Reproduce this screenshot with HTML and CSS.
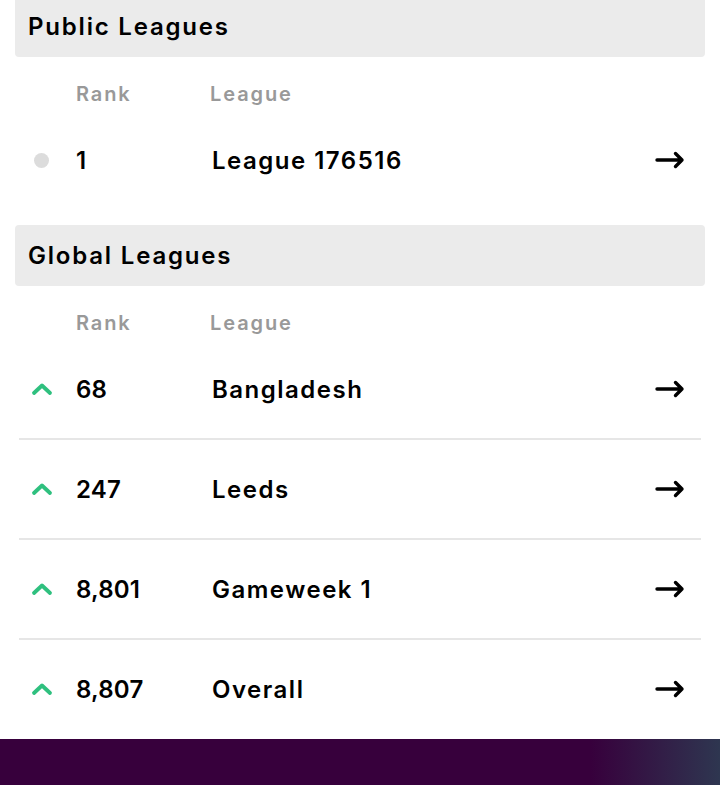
FILE: index.html
```html
<!DOCTYPE html>
<html>
<head>
<meta charset="utf-8">
<link rel="stylesheet" href="styles.css">
</head>
<body>
<main class="page">
  <section class="group first">
    <h2 class="group-title">Public Leagues</h2>
    <div class="cols"><span class="col-rank">Rank</span><span class="col-league">League</span></div>
    <div class="row last">
      <span class="mv"><span class="dot"></span></span>
      <span class="rank">1</span>
      <span class="name">League 176516</span>
      <span class="go"><svg width="30" height="20" viewBox="0 0 30 20"><path d="M2 10H27M20.5 3.5L27 10L20.5 16.5" fill="none" stroke="#000" stroke-width="3.4" stroke-linecap="round" stroke-linejoin="round"/></svg></span>
    </div>
  </section>
  <section class="group">
    <h2 class="group-title">Global Leagues</h2>
    <div class="cols"><span class="col-rank">Rank</span><span class="col-league">League</span></div>
    <div class="row">
      <span class="mv"><svg width="24" height="16" viewBox="0 0 24 16"><path d="M4 12L12 4.5L20 12" fill="none" stroke="#2fc07f" stroke-width="3.8" stroke-linecap="round" stroke-linejoin="round"/></svg></span>
      <span class="rank">68</span>
      <span class="name">Bangladesh</span>
      <span class="go"><svg width="30" height="20" viewBox="0 0 30 20"><path d="M2 10H27M20.5 3.5L27 10L20.5 16.5" fill="none" stroke="#000" stroke-width="3.4" stroke-linecap="round" stroke-linejoin="round"/></svg></span>
    </div>
    <div class="row">
      <span class="mv"><svg width="24" height="16" viewBox="0 0 24 16"><path d="M4 12L12 4.5L20 12" fill="none" stroke="#2fc07f" stroke-width="3.8" stroke-linecap="round" stroke-linejoin="round"/></svg></span>
      <span class="rank">247</span>
      <span class="name">Leeds</span>
      <span class="go"><svg width="30" height="20" viewBox="0 0 30 20"><path d="M2 10H27M20.5 3.5L27 10L20.5 16.5" fill="none" stroke="#000" stroke-width="3.4" stroke-linecap="round" stroke-linejoin="round"/></svg></span>
    </div>
    <div class="row">
      <span class="mv"><svg width="24" height="16" viewBox="0 0 24 16"><path d="M4 12L12 4.5L20 12" fill="none" stroke="#2fc07f" stroke-width="3.8" stroke-linecap="round" stroke-linejoin="round"/></svg></span>
      <span class="rank">8,801</span>
      <span class="name">Gameweek 1</span>
      <span class="go"><svg width="30" height="20" viewBox="0 0 30 20"><path d="M2 10H27M20.5 3.5L27 10L20.5 16.5" fill="none" stroke="#000" stroke-width="3.4" stroke-linecap="round" stroke-linejoin="round"/></svg></span>
    </div>
    <div class="row last">
      <span class="mv"><svg width="24" height="16" viewBox="0 0 24 16"><path d="M4 12L12 4.5L20 12" fill="none" stroke="#2fc07f" stroke-width="3.8" stroke-linecap="round" stroke-linejoin="round"/></svg></span>
      <span class="rank">8,807</span>
      <span class="name">Overall</span>
      <span class="go"><svg width="30" height="20" viewBox="0 0 30 20"><path d="M2 10H27M20.5 3.5L27 10L20.5 16.5" fill="none" stroke="#000" stroke-width="3.4" stroke-linecap="round" stroke-linejoin="round"/></svg></span>
    </div>
  </section>
  <footer class="bar"></footer>
</main>
</body>
</html>
```
FILE: styles.css
```css
html, body {
  margin: 0;
  padding: 0;
  background: #fff;
}
body {
  font-family: Inter, "Noto Sans", sans-serif;
  color: #000;
  overflow: hidden;
}
.page {
  width: 720px;
  height: 789px;
  overflow: hidden;
}
.group {
  margin: 0 15px;
}
.group.first {
  margin-top: -4px;
}
.group + .group {
  margin-top: 14px;
}
.group-title {
  margin: 0;
  height: 61px;
  display: flex;
  align-items: center;
  padding: 0 13px;
  background: #ebebeb;
  border-radius: 4px;
  font-size: 24px;
  font-weight: 600;
  letter-spacing: 1.8px;
}
.cols {
  display: grid;
  grid-template-columns: 61px 134px 1fr;
  height: 22px;
  margin-top: 25px;
  margin-bottom: 7px;
  align-items: center;
  font-size: 20px;
  font-weight: 600;
  color: #999;
  letter-spacing: 1.9px;
}
.col-rank { grid-column: 2; }
.col-league { grid-column: 3; }
.row {
  display: grid;
  grid-template-columns: 57px 136px 1fr 46px;
  align-items: center;
  height: 98px;
  margin: 0 4px;
  border-bottom: 2px solid #e6e6e6;
  font-size: 24px;
  font-weight: 600;
}
.row .mv {
  display: flex;
  justify-content: center;
  margin-left: -12px;
}
.row .name {
  letter-spacing: 1.5px;
}
.row .rank {
  letter-spacing: 0.2px;
}
.row.last {
  border-bottom-color: transparent;
}
.dot {
  width: 15px;
  height: 15px;
  border-radius: 50%;
  background: #dcdcdc;
  display: block;
}
.go {
  display: flex;
  justify-content: flex-start;
}
.go svg { display: block; }
.bar {
  margin-top: -1px;
  height: 46px;
  background: linear-gradient(90deg, #37003c 0%, #37003c 82%, #2e3650 100%);
}
```
